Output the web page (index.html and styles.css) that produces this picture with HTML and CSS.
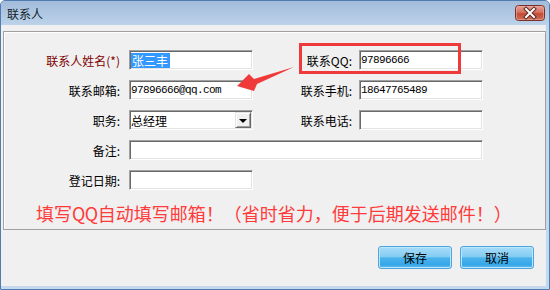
FILE: index.html
```html
<!doctype html>
<html lang="zh-CN">
    <head>
        <meta charset="utf-8">
        <!-- Estilos CSS -->
        <link rel="stylesheet" href="styles.css">
    </head>
    <body>
        <!-- Ventana del dialogo -->
        <div class="Ventana">
            <div class="Titulo">
                <span class="TituloTexto">联系人</span>
                <!-- Boton cerrar -->
                <svg class="Cerrar" width="30" height="16" viewBox="0 0 30 16">
                    <defs>
                        <linearGradient id="GradCerrar" x1="0" y1="0" x2="0" y2="1">
                            <stop offset="0" stop-color="#e6a298"/>
                            <stop offset="0.45" stop-color="#d7705f"/>
                            <stop offset="0.55" stop-color="#c24a35"/>
                            <stop offset="1" stop-color="#d0705a"/>
                        </linearGradient>
                    </defs>
                    <rect x="0.5" y="0.5" width="29" height="15" rx="3" fill="url(#GradCerrar)" stroke="#7a2e25"/>
                    <rect x="1.5" y="1.5" width="27" height="13" rx="2" fill="none" stroke="#eab3aa" stroke-opacity="0.6"/>
                    <path d="M11 4 L19 12 M19 4 L11 12" stroke="#5a2a24" stroke-width="4" stroke-linecap="square"/>
                    <path d="M11 4 L19 12 M19 4 L11 12" stroke="#ffffff" stroke-width="2" stroke-linecap="square"/>
                </svg>
            </div>

            <div class="Cliente">
                <!-- Marco con los campos del contacto -->
                <div class="Grupo">
                    <div class="Formulario">
                        <span class="Etiqueta Obligatorio">联系人姓名(*)</span>
                        <div class="Caja"><span class="Seleccion">张三丰</span></div>
                        <span class="Etiqueta Derecha">联系QQ:</span>
                        <div class="Caja Mono">97896666</div>

                        <span class="Etiqueta">联系邮箱:</span>
                        <div class="Caja Mono">97896666@qq.com</div>
                        <span class="Etiqueta Derecha">联系手机:</span>
                        <div class="Caja Mono">18647765489</div>

                        <span class="Etiqueta">职务:</span>
                        <div class="Caja Combo">
                            <span class="ComboTexto">总经理</span>
                            <span class="ComboBoton"></span>
                        </div>
                        <span class="Etiqueta Derecha">联系电话:</span>
                        <div class="Caja"></div>

                        <span class="Etiqueta">备注:</span>
                        <div class="Caja Ancha"></div>

                        <span class="Etiqueta">登记日期:</span>
                        <div class="Caja"></div>
                    </div>
                    <p class="Aviso">填写<span class="Qq">QQ</span>自动填写邮箱！（省时省力，便于后期发送邮件！）</p>
                </div>

                <div class="Botones">
                    <button class="Boton">保存</button>
                    <button class="Boton">取消</button>
                </div>
            </div>

            <!-- Anotaciones en rojo sobre la captura -->
            <div class="Marca"></div>
            <svg class="Flecha" width="550" height="290" viewBox="0 0 550 290">
                <polygon points="237,86 249,74 254,79 294,67 257,84 254,91" fill="#f03a3a"/>
            </svg>
        </div>
    </body>
</html>
```

FILE: styles.css
```css
* { box-sizing:border-box; }
body        { margin:0; background:#fff; font:12px "Noto Sans CJK SC", "Liberation Sans", sans-serif; color:#000; }
.Mono       { font-family:"Liberation Mono", monospace; font-size:11px; letter-spacing:-0.6px; }  /* Texto de las cajas (6px por caracter) */

/* Ventana completa */
.Ventana {
    position:relative;
    width:550px;
    height:290px;
    border:1px solid #4f7db3;
    border-radius:5px 5px 0 0;
    background:linear-gradient(#a7c0dd, #c4d8ee 30px, #c4d8ee);
}

/* Barra de titulo */
.Titulo {
    height:24px;
    display:flex;
    justify-content:space-between;
    align-items:flex-start;
    padding:0 4px 0 6px;
    border-radius:4px 4px 0 0;
    background:linear-gradient(#a2bcda, #bcd2ea);
}
.TituloTexto    { line-height:26px; color:#141e2a; }
.Cerrar         { margin-top:4px; display:block; }

/* Area del cliente */
.Cliente {
    width:545px;
    height:261px;
    background:#f0f0f0;
    padding:6px 0 0 2px;
    border-right:1px solid #e8eef6;
}

/* Marco de grupo */
.Grupo {
    width:543px;
    height:199px;
    border:1px solid #a0a0a0;
    box-shadow:inset 1px 1px #fff;
}

/* Rejilla etiqueta / caja */
.Formulario {
    display:grid;
    grid-template-columns:125px 124px 106px 124px;
    grid-auto-rows:20px;
    row-gap:10px;
    padding-top:18px;
}
.Etiqueta                   { display:flex; align-items:center; justify-content:flex-end; padding-right:9px; white-space:nowrap; }
.Etiqueta.Derecha           { padding-right:7px; }
.Obligatorio                { color:#800000; }

/* Cajas de texto hundidas */
.Caja {
    display:flex;
    align-items:center;
    padding-left:1px;
    background:#fff;
    border-top:1px solid #a0a0a0;
    border-left:1px solid #a0a0a0;
    border-right:1px solid #fff;
    border-bottom:1px solid #fff;
    box-shadow:inset 1px 1px #696969, inset -1px -1px #e3e3e3;
    white-space:nowrap;
    overflow:hidden;
}
.Caja.Ancha                 { grid-column:2 / 5; }
.Seleccion                  { background:#3399ff; color:#fff; line-height:15px; padding:0 2px 0 1px; }

/* Lista desplegable */
.Combo                      { padding-right:1px; }
.ComboTexto                 { flex:1; }
.ComboBoton {
    width:16px;
    height:16px;
    display:flex;
    align-items:center;
    justify-content:center;
    background:#f0f0f0;
    border-top:1px solid #e3e3e3;
    border-left:1px solid #e3e3e3;
    border-right:1px solid #696969;
    border-bottom:1px solid #696969;
    box-shadow:inset 1px 1px #fff, inset -1px -1px #a0a0a0;
}
.ComboBoton::after {
    content:"";
    border-left:4px solid transparent;
    border-right:4px solid transparent;
    border-top:4px solid #000;
    margin-top:1px;
}

/* Texto de aviso en rojo */
.Aviso {
    margin:13px 0 0 0;
    padding-left:32px;
    font-size:18px;
    line-height:20px;
    color:#ff3b3b;
    white-space:nowrap;
}
.Qq                         { letter-spacing:-0.5px; }

/* Botones inferiores */
.Botones {
    display:flex;
    justify-content:flex-end;
    gap:8px;
    padding:16px 11px 0 0;
}
.Boton {
    width:74px;
    height:23px;
    padding:0;
    font:inherit;
    color:#000;
    border:1px solid #4aa6e0;
    border-radius:3px;
    box-shadow:inset 0 0 0 1px #bfe6fb;
    background:linear-gradient(#a8dcf8, #85cdf4 45%, #4db4ec 52%, #34a6e8 85%, #6cc4f0);
}

/* Recuadro rojo alrededor de QQ */
.Marca {
    position:absolute;
    left:298px;
    top:42px;
    width:162px;
    height:31px;
    border:3px solid #ee3a3a;
}
/* Flecha roja */
.Flecha {
    position:absolute;
    left:-1px;
    top:-1px;
    pointer-events:none;
}
```
